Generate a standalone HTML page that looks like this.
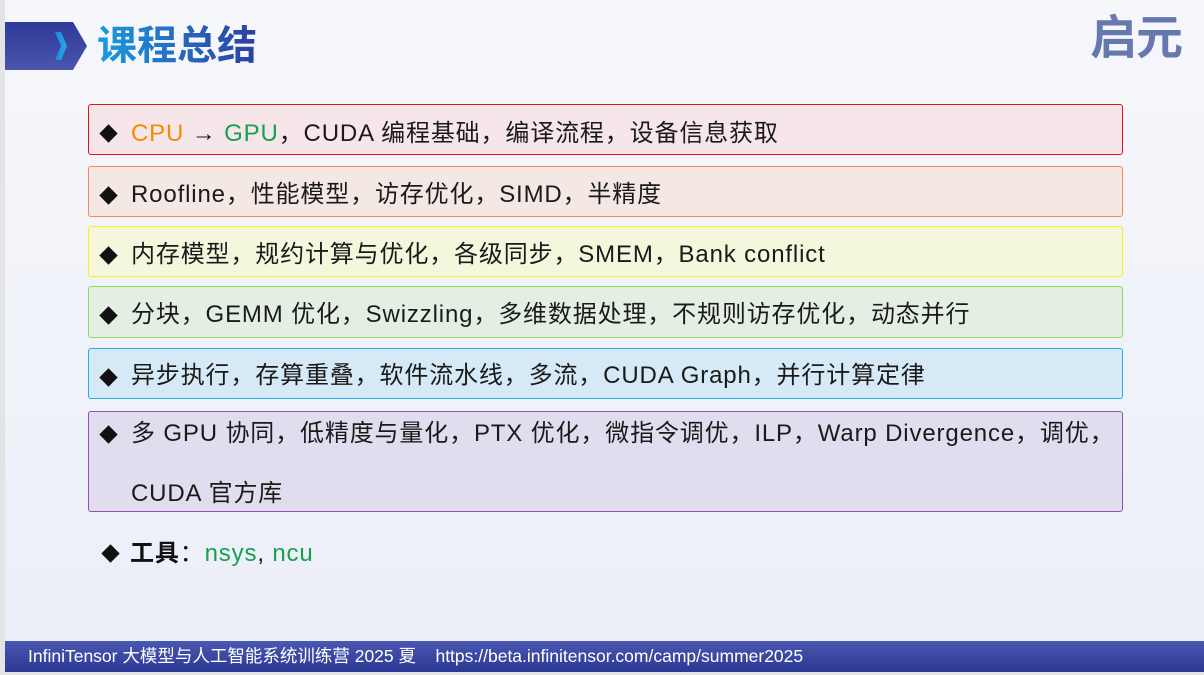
<!DOCTYPE html>
<html><head><meta charset="utf-8"><style>
*{margin:0;padding:0;box-sizing:border-box}
body{width:1204px;height:675px;overflow:hidden;background:#e4e4e6;font-family:"Liberation Sans","Noto Sans CJK SC",sans-serif;position:relative}
#pg{position:absolute;left:5px;top:0;width:1199px;height:672px;background:linear-gradient(180deg,#f6f7fb,#ebeef8)}
.tab{position:absolute;left:5px;top:22px;width:82px;height:48px;background:linear-gradient(180deg,#2e3a98,#4a55ad);clip-path:polygon(0 0,68px 0,82px 24px,68px 48px,0 48px)}
.chev{position:absolute;left:55px;top:32px;width:12px;height:28px;background:linear-gradient(90deg,#1a8ad8,#2aa8ee);clip-path:polygon(0 0,6px 0,12px 14px,6px 28px,0 28px,6px 14px)}
h1{position:absolute;left:97px;top:20px;font-size:40px;font-weight:bold;background:linear-gradient(90deg,#1a9be0,#2e3ea0);-webkit-background-clip:text;color:transparent;line-height:52px}
.logo{position:absolute;left:1090px;top:13px;font-size:47px;color:#6778ae;font-weight:bold;line-height:50px;letter-spacing:-1px}
.box{position:absolute;left:88px;width:1035px;border:1.5px solid;border-radius:3px;font-size:24px;letter-spacing:0.85px;color:#1a1a1a;padding-left:42px;white-space:nowrap}
.box::before,.tool::before{content:"";position:absolute;left:13px;top:22px;width:13px;height:13px;background:#111;transform:rotate(45deg)}
.b6::before{top:16px}
.tool{position:absolute;left:130px;top:526px;font-size:24px;letter-spacing:0.85px;line-height:56px;color:#111}
.tool::before{left:-26px;top:21px}
.ft{position:absolute;left:5px;top:641px;width:1199px;height:31px;background:linear-gradient(180deg,#4b58b0,#2c3994);color:#fff;font-size:17.5px;line-height:31px;padding-left:23px}
</style></head><body>
<div id="pg"></div>
<div class="tab"></div><div class="chev"></div>
<h1>课程总结</h1>
<div class="logo">启元</div>
<div class="box" style="top:104px;height:51px;line-height:57px;background:#f6e6ea;border-color:#e8101c"><span style="color:#f28c00">CPU</span> → <span style="color:#17a050">GPU</span>，CUDA 编程基础，编译流程，设备信息获取</div>
<div class="box" style="top:166px;height:51px;line-height:55px;background:#f3e8e4;border-color:#f08a50">Roofline，性能模型，访存优化，SIMD，半精度</div>
<div class="box" style="top:226px;height:51px;line-height:55px;background:#f5f7dc;border-color:#f5f020">内存模型，规约计算与优化，各级同步，SMEM，Bank conflict</div>
<div class="box" style="top:286px;height:52px;line-height:55px;background:#e4efe3;border-color:#90d860">分块，GEMM 优化，Swizzling，多维数据处理，不规则访存优化，动态并行</div>
<div class="box" style="top:348px;height:51px;line-height:53px;background:#d5e9f6;border-color:#2aace8">异步执行，存算重叠，软件流水线，多流，CUDA Graph，并行计算定律</div>
<div class="box b6" style="top:411px;height:101px;line-height:60px;background:#e2dcef;border-color:#9050b8"><div style="margin-top:-8px">多 GPU 协同，低精度与量化，PTX 优化，微指令调优，ILP，Warp Divergence，调优，<br>CUDA 官方库</div></div>
<div class="tool"><b>工具</b>：<span style="color:#17a050">nsys</span>, <span style="color:#17a050">ncu</span></div>
<div class="ft">InfiniTensor 大模型与人工智能系统训练营 2025 夏 &nbsp;&nbsp;&nbsp;https://beta.infinitensor.com/camp/summer2025</div>
</body></html>
